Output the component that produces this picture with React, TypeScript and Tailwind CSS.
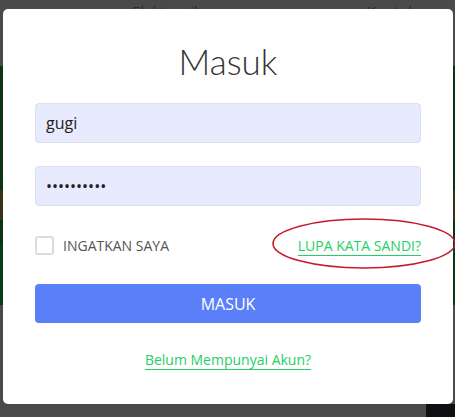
import React from 'react';

export default function App() {
  const [remember, setRemember] = React.useState(false);

  return (
    <div
      className="relative w-[455px] h-[417px] overflow-hidden bg-[#4a4a4a]"
      style={{ fontFamily: '"Open Sans", "Liberation Sans", sans-serif' }}
    >
      {/* dimmed page behind the modal */}
      <div className="flex flex-col h-full">
        <div className="h-[66px] flex gap-[165px] pl-[132px] pt-[2px] text-[15px] leading-[18px] text-[#2c2c2c]">
          <span>Elektronik</span>
          <span>Kontak</span>
        </div>
        <div className="h-[124px] bg-[#0a3515]" />
        <div className="h-[30px] bg-[#3a3216]" />
        <div className="h-[25px] bg-[#0a3515]" />
        <div className="h-[60px] bg-[#0c3a18]" />
        <div className="flex-1 flex items-end">
          <div className="ml-auto w-[29px] h-[13px] bg-[#0f1013]" />
        </div>
      </div>

      {/* modal */}
      <div className="absolute left-[3px] top-[9px] w-[450px] h-[395px] bg-white rounded-[5px] px-8 flex flex-col">
        <h1
          className="text-center text-[35px] font-light text-[#333] leading-none mt-[35px]"
          style={{ fontFamily: 'Lato, "Open Sans", sans-serif' }}
        >
          Masuk
        </h1>

        <input
          type="text"
          defaultValue="gugi"
          className="mt-[24px] h-[40px] w-full rounded-[4px] border border-[#dcdfee] bg-[#e8ebfd] px-[10px] text-[16px] text-[#222] outline-none"
        />
        <input
          type="password"
          defaultValue="passwordku"
          className="mt-[23px] h-[40px] w-full rounded-[4px] border border-[#dcdfee] bg-[#e8ebfd] px-[10px] text-[16px] text-[#222] outline-none"
        />

        <div className="relative mt-[29px] flex items-center justify-between">
          <label className="flex items-center gap-[9px] cursor-pointer">
            <input
              type="checkbox"
              checked={remember}
              onChange={() => setRemember(!remember)}
              className="sr-only"
            />
            <span className="w-[19px] h-[19px] rounded-[3px] border-2 border-[#dcdcdc] bg-white" />
            <span className="text-[14px] text-[#555]">INGATKAN SAYA</span>
          </label>
          <a
            href="#"
            className="text-[14px] text-[#25cf66] underline underline-offset-[4px] decoration-[#25cf66]"
          >
            LUPA KATA SANDI?
          </a>

          {/* red annotation ellipse */}
          <svg
            className="absolute left-[237px] -top-[17px] pointer-events-none"
            width="186"
            height="52"
            viewBox="0 0 186 52"
          >
            <ellipse cx="92" cy="25.5" rx="91" ry="24.5" fill="none" stroke="#c41a2b" strokeWidth="1.6" />
          </svg>
        </div>

        <button
          type="button"
          className="mt-[28px] h-[39px] w-full rounded-[4px] bg-[#5a7ff8] text-[16px] text-white"
        >
          MASUK
        </button>

        <div className="mt-[24px] text-center">
          <a
            href="#"
            className="text-[14px] text-[#25cf66] underline underline-offset-[4px] decoration-[#25cf66]"
          >
            Belum Mempunyai Akun?
          </a>
        </div>
      </div>
    </div>
  );
}
